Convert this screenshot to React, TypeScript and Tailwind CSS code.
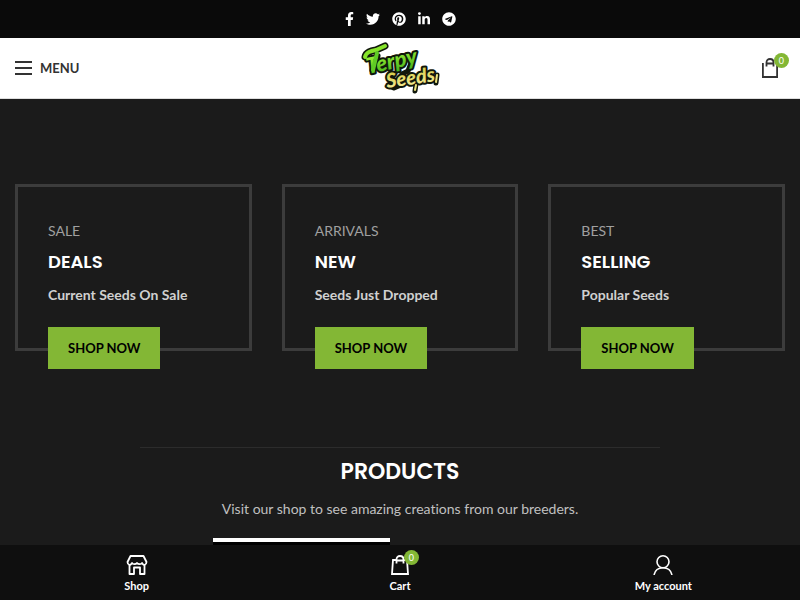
import { FaFacebookF, FaTwitter, FaPinterest, FaLinkedinIn, FaTelegram } from 'react-icons/fa';

const socials = [
  { name: 'Facebook', Icon: FaFacebookF, size: 'w-[9px]' },
  { name: 'Twitter', Icon: FaTwitter, size: 'w-3.5' },
  { name: 'Pinterest', Icon: FaPinterest, size: 'w-3.5' },
  { name: 'LinkedIn', Icon: FaLinkedinIn, size: 'w-3' },
  { name: 'Telegram', Icon: FaTelegram, size: 'w-3.5' },
];

const banners = [
  { label: 'SALE', title: 'DEALS', text: 'Current Seeds On Sale' },
  { label: 'ARRIVALS', title: 'NEW', text: 'Seeds Just Dropped' },
  { label: 'BEST', title: 'SELLING', text: 'Popular Seeds' },
];

function Logo() {
  return (
    <svg className="h-[52px] w-20 overflow-visible" viewBox="0 0 80 52" role="img" aria-label="Terpy Seeds">
      <defs>
        <linearGradient id="terpy" x1="0" y1="0" x2="0" y2="1">
          <stop offset="0.2" stopColor="#9af034" />
          <stop offset="1" stopColor="#3fae1b" />
        </linearGradient>
        <linearGradient id="seeds" x1="0" y1="0" x2="0" y2="1">
          <stop offset="0.2" stopColor="#d6cf4a" />
          <stop offset="1" stopColor="#f6efa0" />
        </linearGradient>
      </defs>
      {/* dark edges of the brush strokes and drips */}
      <g fill="none" stroke="#10170b" strokeLinecap="round" strokeLinejoin="round">
        <path d="M5 15C6 10 11 9 16 8l9-4" strokeWidth="7" />
        <path d="M17 14l-4 14" strokeWidth="7" />
        <path d="M53 16l-5 13-6 3" strokeWidth="5" />
        <path d="M29 43l5 3 7-3M56 42l-1 7M77 33l-1 8" strokeWidth="5" />
      </g>
      <g fontFamily="Lato, sans-serif" fontStyle="italic" fontWeight="900" stroke="#10170b" strokeLinejoin="round" paintOrder="stroke">
        <text x="8" y="32" fontSize="22" strokeWidth="4" fill="url(#terpy)" transform="rotate(-12 8 32)">
          Terpy
        </text>
        <text x="27" y="46" fontSize="20" strokeWidth="4" fill="url(#seeds)" transform="rotate(-8 27 46)">
          Seeds
        </text>
      </g>
      <g fill="none" strokeLinecap="round" strokeLinejoin="round">
        <path d="M5 15C6 10 11 9 16 8l9-4" stroke="#86e32b" strokeWidth="4" />
        <path d="M17 11l-4 17" stroke="#5fcb25" strokeWidth="4" />
        <path d="M56 43l-1 5M77 33l-1 7" stroke="#ece47e" strokeWidth="2" />
      </g>
    </svg>
  );
}

function BagIcon({ tapered = false }: { tapered?: boolean }) {
  return (
    <svg className="h-5 w-[18px]" viewBox="0 0 18 20" fill="none" stroke="currentColor" strokeWidth="1.8" aria-hidden="true">
      <path d={tapered ? 'M5 5H2L1 19h16L16 5h-3' : 'M1.9 5v14h14.200V5'} />
      <path d="M5.500 8.500V4.500C5.500 2.400 7 1 9 1s3.500 1.400 3.500 3.500v4M6 5.500h6" />
    </svg>
  );
}

function StoreIcon() {
  return (
    <svg className="h-5 w-[22px]" viewBox="0 0 22 20" fill="none" stroke="currentColor" strokeWidth="1.8" strokeLinejoin="round" aria-hidden="true">
      <path d="M4.500 1h13l3 6c0 1.500-.5 2.500-2 3-1.500 0-2-1-2.500-2-.5 1.500-4 1.500-5 0-1 1.500-4.500 1.500-5 0-.5 1-1 2-2.500 2-1.500-.5-2-1.500-2-3z" />
      <path d="M3.500 10v9H8v-6.500h6V19h4.500v-9" />
    </svg>
  );
}

function UserIcon() {
  return (
    <svg className="h-5 w-5" viewBox="0 0 20 20" fill="none" stroke="currentColor" strokeWidth="1.6" aria-hidden="true">
      <circle cx="10" cy="6.800" r="6" />
      <path d="M1 20c1-4.500 4.500-7.200 9-7.200s8 2.700 9 7.200" />
    </svg>
  );
}

function CountBadge() {
  return (
    <span className="absolute -top-[5px] -right-2.5 flex size-[15px] items-center justify-center rounded-full bg-[#83b735] text-[9px] leading-none font-normal text-white">
      0
    </span>
  );
}

export default function App() {
  return (
    <div className="min-h-screen bg-[#1b1b1b] font-[Lato,sans-serif] text-sm [font-variant-ligatures:none]">
      <div className="flex h-[38px] items-center justify-center gap-3 bg-[#0a0a0a] text-white">
        {socials.map(({ name, Icon, size }) => (
          <a key={name} href="#" aria-label={name}>
            <Icon className={`h-3.5 ${size}`} />
          </a>
        ))}
      </div>

      <header className="grid h-[61px] grid-cols-3 items-center border-b border-[#dedede] bg-white px-[15px] text-[#333]">
        <button className="flex items-center gap-2 justify-self-start text-[13px] font-bold">
          <svg className="h-3.5 w-[17px]" viewBox="0 0 17 14" fill="currentColor" aria-hidden="true">
            <path d="M0 0h17v2H0zM0 6h17v2H0zM0 12h17v2H0z" />
          </svg>
          MENU
        </button>
        <a href="#" className="justify-self-center">
          <Logo />
        </a>
        <a href="#" aria-label="Cart" className="relative mr-1.5 justify-self-end">
          <BagIcon />
          <CountBadge />
        </a>
      </header>

      <main className="pt-[85px]">
        <section className="grid grid-cols-3 gap-[30px] px-[15px]">
          {banners.map((b) => (
            <div key={b.title} className="border-3 border-[#3c3c3c] px-[30px] pt-[33px]">
              <p className="leading-[22px] text-[#a0a0a0]">{b.label}</p>
              <h4 className="mt-2 font-[Poppins,Inter,sans-serif] text-lg leading-6 font-semibold text-white">{b.title}</h4>
              <p className="mt-2.5 leading-[22px] font-bold text-[#d0d0d0]">{b.text}</p>
              <button className="mt-[21px] -mb-[21px] block h-[42px] bg-[#83b735] px-5 text-[13px] font-bold text-black">
                SHOP NOW
              </button>
            </div>
          ))}
        </section>

        <section className="mt-24 text-center">
          <hr className="mx-auto w-[65%] border-[#2c2c2c]" />
          <h2 className="mt-2 font-[Poppins,Inter,sans-serif] text-[22px] leading-8 font-semibold text-white">PRODUCTS</h2>
          <p className="mt-2.5 leading-[22px] text-[#c0c0c0]">Visit our shop to see amazing creations from our breeders.</p>
          <div className="mx-auto mt-[18px] grid w-[374px] grid-cols-2 gap-5">
            <div className="h-[62px] border-t-4 border-white bg-black" />
          </div>
        </section>
      </main>

      <nav className="fixed inset-x-0 bottom-0 grid h-[55px] grid-cols-3 bg-[#0f0f0f] px-[5px] pt-2.5 text-[11px] leading-4 font-bold text-white">
        <a href="#" className="flex flex-col items-center gap-[3px]">
          <StoreIcon />
          Shop
        </a>
        <a href="#" className="flex flex-col items-center gap-[3px]">
          <span className="relative">
            <BagIcon tapered />
            <CountBadge />
          </span>
          Cart
        </a>
        <a href="#" className="flex flex-col items-center gap-[3px]">
          <UserIcon />
          My account
        </a>
      </nav>
    </div>
  );
}
